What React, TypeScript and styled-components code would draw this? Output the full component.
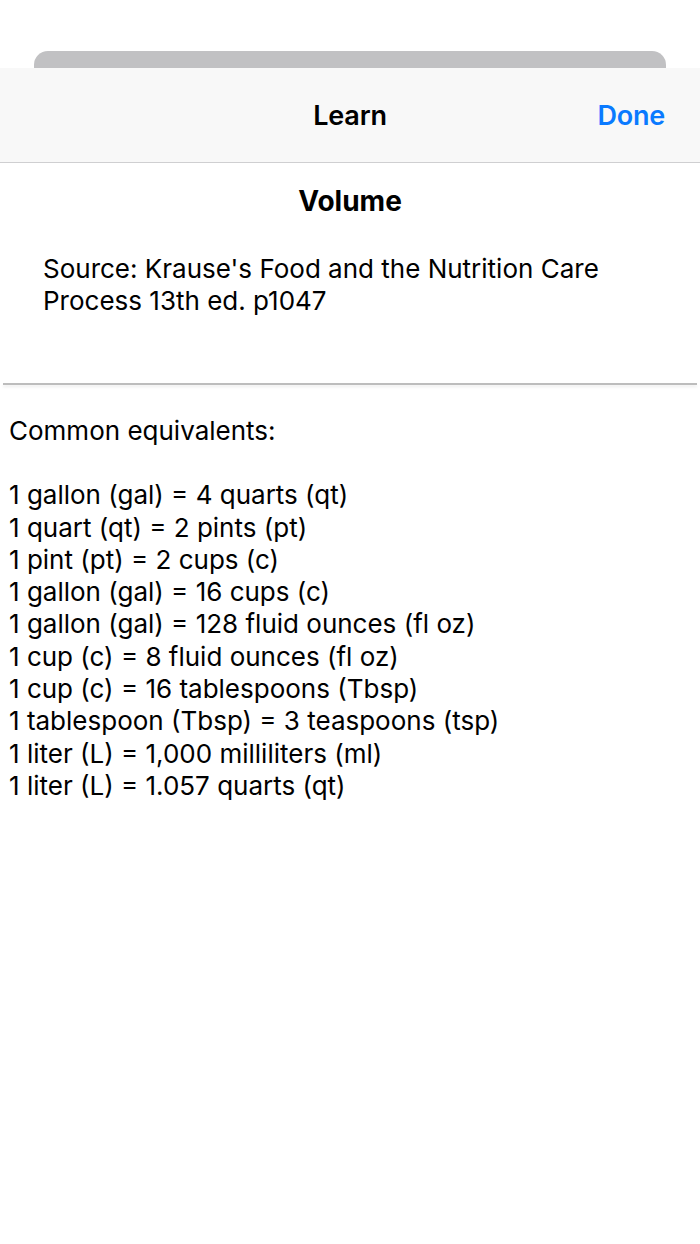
import styled, { createGlobalStyle } from "styled-components";

const GlobalStyle = createGlobalStyle`
	html, body {
		margin: 0;
		padding: 0;
		background: #ffffff;
		font-family: Inter, "Liberation Sans", sans-serif;
		color: #000000;
	}
`;

const Page = styled.div`
	width: 700px;
	height: 1244px;
	background: #ffffff;
	display: flex;
	flex-direction: column;
	overflow: hidden;
`;

const BackCard = styled.div`
	margin: 51px 34px 0;
	height: 17px;
	background: #c1c1c3;
	border-radius: 14px 14px 0 0;
`;

const NavBar = styled.header`
	height: 94px;
	background: #f8f8f8;
	border-bottom: 1px solid #cfcfd1;
	display: grid;
	grid-template-columns: 1fr auto 1fr;
	align-items: center;
	padding: 0 35px;
`;

const NavTitle = styled.h1`
	grid-column: 2;
	margin: 0;
	font-size: 27px;
	font-weight: 600;
	letter-spacing: -0.2px;
`;

const DoneButton = styled.button`
	grid-column: 3;
	justify-self: end;
	background: none;
	border: none;
	padding: 0;
	font-family: inherit;
	font-size: 27px;
	font-weight: 600;
	color: #0a7aff;
	letter-spacing: -0.2px;
`;

const Header = styled.section`
	display: flex;
	flex-direction: column;
	align-items: center;
	padding: 20px 0 0;
	height: 220px;
	box-sizing: border-box;
`;

const SectionTitle = styled.h2`
	margin: 0;
	font-size: 28px;
	font-weight: 700;
	line-height: 36px;
`;

const Source = styled.p`
	align-self: stretch;
	margin: 34px 0 0;
	padding: 0 43px;
	font-size: 26px;
	line-height: 32px;
`;

const Divider = styled.hr`
	margin: 0 3px;
	border: none;
	height: 2px;
	background: #bdbdbd;
	box-shadow: 0 2px 3px rgba(0, 0, 0, 0.08);
`;

const Body = styled.div`
	padding: 30px 9px 0;
	font-size: 26px;
	line-height: 32.3px;
`;

const Line = styled.div`
	white-space: nowrap;
`;

const Gap = styled.div`
	height: 32px;
`;

const equivalents = [
	"1 gallon (gal) = 4 quarts (qt)",
	"1 quart (qt) = 2 pints (pt)",
	"1 pint (pt) = 2 cups (c)",
	"1 gallon (gal) = 16 cups (c)",
	"1 gallon (gal) = 128 fluid ounces (fl oz)",
	"1 cup (c) = 8 fluid ounces (fl oz)",
	"1 cup (c) = 16 tablespoons (Tbsp)",
	"1 tablespoon (Tbsp) = 3 teaspoons (tsp)",
	"1 liter (L) = 1,000 milliliters (ml)",
	"1 liter (L) = 1.057 quarts (qt)",
];

function App() {
	return (
		<>
			<GlobalStyle />
			<Page>
				<BackCard />
				<NavBar>
					<NavTitle>Learn</NavTitle>
					<DoneButton>Done</DoneButton>
				</NavBar>
				<Header>
					<SectionTitle>Volume</SectionTitle>
					<Source>Source: Krause's Food and the Nutrition Care Process 13th ed. p1047</Source>
				</Header>
				<Divider />
				<Body>
					<Line>Common equivalents:</Line>
					<Gap />
					{equivalents.map((text) => (
						<Line key={text}>{text}</Line>
					))}
				</Body>
			</Page>
		</>
	);
}

export default App;
